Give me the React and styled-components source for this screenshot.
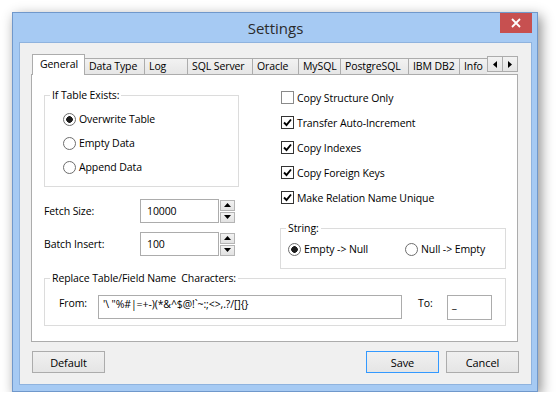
import styled, { createGlobalStyle } from "styled-components";

const GlobalStyle = createGlobalStyle`
    body {
        margin: 0;
        background: #ffffff;
        font-family: "Open Sans", "Noto Sans", sans-serif;
        font-size: 10.5px;
        letter-spacing: -0.1px;
        color: #000000;
    }

    * {
        box-sizing: border-box;
    }
`;

const tabs = [
    { name: "General", w: 53 },
    { name: "Data Type", w: 61 },
    { name: "Log", w: 44 },
    { name: "SQL Server", w: 66 },
    { name: "Oracle", w: 47 },
    { name: "MySQL", w: 43 },
    { name: "PostgreSQL", w: 69 },
    { name: "IBM DB2", w: 52 },
    { name: "Info", w: 28, clipped: true },
];

const checks = [
    { label: "Copy Structure Only", on: false },
    { label: "Transfer Auto-Increment", on: true },
    { label: "Copy Indexes", on: true },
    { label: "Copy Foreign Keys", on: true },
    { label: "Make Relation Name Unique", on: true },
];

function Triangle({ dir }) {
    const points = {
        up: "0,4 3.5,0 7,4",
        down: "0,0 3.5,4 7,0",
        left: "4,0 0,3.5 4,7",
        right: "0,0 4,3.5 0,7",
    }[dir];
    const vertical = dir === "up" || dir === "down";

    return (
        <svg width={vertical ? 7 : 4} height={vertical ? 4 : 7} viewBox={vertical ? "0 0 7 4" : "0 0 4 7"}>
            <polygon points={points} fill="#000" />
        </svg>
    );
}

function Radio({ checked, children }) {
    return (
        <RadioRow>
            <RadioDot $checked={checked} />
            <span>{children}</span>
        </RadioRow>
    );
}

function NumberField({ label, value }) {
    return (
        <FieldRow>
            <FieldLabel>{label}</FieldLabel>
            <TextBox $w={79}>{value}</TextBox>
            <Spinner>
                <SpinButton><Triangle dir="up" /></SpinButton>
                <SpinButton><Triangle dir="down" /></SpinButton>
            </Spinner>
        </FieldRow>
    );
}

function App() {
    return (
        <>
            <GlobalStyle />
            <Window>
                <TitleBar>
                    <Title>Settings</Title>
                    <CloseButton>
                        <svg width="10" height="10" viewBox="0 0 10 10">
                            <path d="M1 1 L9 9 M9 1 L1 9" stroke="#fff" strokeWidth="1.8" />
                        </svg>
                    </CloseButton>
                </TitleBar>
                <Client>
                    <TabStrip>
                        {tabs.map((tab, i) => (
                            <Tab key={tab.name} $w={tab.w} $active={i === 0} $first={i === 0} $clipped={tab.clipped}>
                                {tab.name}
                            </Tab>
                        ))}
                        <ScrollArrows>
                            <ArrowButton><Triangle dir="left" /></ArrowButton>
                            <ArrowButton><Triangle dir="right" /></ArrowButton>
                        </ScrollArrows>
                    </TabStrip>
                    <Panel>
                        <Column>
                            <Group>
                                <Legend>If Table Exists:</Legend>
                                <GroupBody $pad="4px 0 7px 18px">
                                    <Radio checked>Overwrite Table</Radio>
                                    <Radio>Empty Data</Radio>
                                    <Radio>Append Data</Radio>
                                </GroupBody>
                            </Group>
                            <NumberField label="Fetch Size:" value="10000" />
                            <NumberField label="Batch Insert:" value="100" />
                        </Column>
                        <Column $right>
                            {checks.map((c) => (
                                <CheckRow key={c.label}>
                                    <CheckBox $checked={c.on}>
                                        {c.on && (
                                            <svg width="9" height="9" viewBox="0 0 9 9">
                                                <path d="M1 4.5 L3.5 7 L8 1.5" stroke="#000" strokeWidth="1.9" fill="none" />
                                            </svg>
                                        )}
                                    </CheckBox>
                                    <span>{c.label}</span>
                                </CheckRow>
                            ))}
                            <Group $top={10}>
                                <Legend>String:</Legend>
                                <GroupBody $pad="1px 0 7px 7px" $cols="117px auto">
                                    <Radio checked>{"Empty -> Null"}</Radio>
                                    <Radio>{"Null -> Empty"}</Radio>
                                </GroupBody>
                            </Group>
                        </Column>
                        <Group $wide $top={1}>
                            <Legend>Replace Table/Field Name&nbsp; Characters:</Legend>
                            <ReplaceRow>
                                <FieldLabel $w={39}>From:</FieldLabel>
                                <TextBox $w={304} $h={24} $compact>{"'\\ \"%#|=+-)(*&^$@!`~:;<>,.?/[]{}"}</TextBox>
                                <FieldLabel $w={29} $gap={16}>To:</FieldLabel>
                                <TextBox $w={45} $h={25} $compact>_</TextBox>
                            </ReplaceRow>
                        </Group>
                    </Panel>
                    <ButtonRow>
                        <Button>Default</Button>
                        <Button $default>Save</Button>
                        <Button>Cancel</Button>
                    </ButtonRow>
                </Client>
            </Window>
        </>
    );
}

const Window = styled.div`
    margin: 12px 0 0 12px;
    width: 526px;
    height: 380px;
    display: flex;
    flex-direction: column;
    padding: 0 5px 6px 6px;
    background: #a6caf3;
    border: 1px solid #7098cb;
    box-shadow: 3px 4px 12px rgba(0, 0, 0, 0.45);
`;

const TitleBar = styled.div`
    height: 29px;
    display: grid;
    grid-template-columns: 1fr auto 1fr;
    align-items: start;
`;

const Title = styled.div`
    grid-column: 2;
    font-size: 15px;
    letter-spacing: 0;
    line-height: 31px;
    color: #2b2b2b;
`;

const CloseButton = styled.div`
    grid-column: 3;
    justify-self: end;
    width: 32px;
    height: 20px;
    background: #c75050;
    display: flex;
    align-items: center;
    justify-content: center;
`;

const Client = styled.div`
    flex: 1;
    display: flex;
    flex-direction: column;
    padding: 11px 12px 11px 11px;
    background: #f0f0f0;
    border: 1px solid #8fb3de;
`;

const TabStrip = styled.div`
    margin-left: 1px;
    width: 486px;
    height: 20px;
    display: flex;
    align-items: flex-end;
`;

const Tab = styled.div`
    position: relative;
    z-index: ${(p) => (p.$active ? 1 : 0)};
    flex: none;
    width: ${(p) => p.$w}px;
    height: ${(p) => (p.$active ? 21 : 16)}px;
    margin-left: ${(p) => (p.$first ? 0 : -1)}px;
    margin-bottom: ${(p) => (p.$active ? -1 : 0)}px;
    padding-left: ${(p) => (p.$active ? 7 : 4)}px;
    border: 1px solid #acacac;
    border-bottom: none;
    border-right: ${(p) => (p.$clipped ? "none" : "1px solid #acacac")};
    background: ${(p) => (p.$active ? "#ffffff" : "linear-gradient(#f2f2f2, #e6e6e6)")};
    line-height: ${(p) => (p.$active ? 19 : 15)}px;
    white-space: nowrap;
    overflow: hidden;
`;

const ScrollArrows = styled.div`
    align-self: flex-start;
    margin-top: 2px;
    display: flex;
`;

const ArrowButton = styled.div`
    width: 16px;
    height: 16px;
    border: 1px solid #acacac;
    background: linear-gradient(#f2f2f2, #e5e5e5);
    display: flex;
    align-items: center;
    justify-content: center;

    & + & {
        margin-left: -1px;
    }
`;

const Panel = styled.div`
    width: 487px;
    height: 268px;
    background: #ffffff;
    border: 1px solid #acacac;
    padding: 12px 11px 0 12px;
    display: grid;
    grid-template-columns: 195px 226px;
    column-gap: 41px;
    align-content: start;
`;

const Column = styled.div`
    display: flex;
    flex-direction: column;
    margin-top: ${(p) => (p.$right ? -2 : 0)}px;
`;

const Group = styled.fieldset`
    grid-column: ${(p) => (p.$wide ? "1 / -1" : "auto")};
    margin: ${(p) => p.$top || 0}px 0 0 0;
    padding: 0;
    min-width: 0;
    border: 1px solid #dcdcdc;
`;

const Legend = styled.legend`
    margin-left: 5px;
    padding: 0 2px;
    line-height: 16px;
`;

const GroupBody = styled.div`
    padding: ${(p) => p.$pad};
    display: grid;
    grid-template-columns: ${(p) => p.$cols || "1fr"};
`;

const RadioRow = styled.div`
    height: 24px;
    display: flex;
    align-items: center;
    gap: 3px;
`;

const RadioDot = styled.span`
    flex: none;
    width: 13px;
    height: 13px;
    border-radius: 50%;
    border: 1px solid #6d6d6d;
    background: ${(p) => (p.$checked ? "radial-gradient(circle, #1c1c1c 0 3px, #ffffff 3.6px)" : "#ffffff")};
`;

const CheckRow = styled.div`
    height: 25px;
    margin-left: 1px;
    display: flex;
    align-items: center;
    gap: 3px;
`;

const CheckBox = styled.span`
    flex: none;
    width: 13px;
    height: 13px;
    border: 1px solid ${(p) => (p.$checked ? "#333333" : "#8a8a8a")};
    background: #ffffff;
    display: flex;
    align-items: center;
    justify-content: center;
`;

const FieldRow = styled.div`
    display: flex;
    align-items: center;
    margin-top: 12px;

    & + & {
        margin-top: 9px;
    }
`;

const FieldLabel = styled.span`
    flex: none;
    width: ${(p) => p.$w || 96}px;
    margin-left: ${(p) => p.$gap || 0}px;
    line-height: 16px;
`;

const TextBox = styled.div`
    flex: none;
    width: ${(p) => p.$w}px;
    height: ${(p) => p.$h || 24}px;
    border: 1px solid #acacac;
    background: #ffffff;
    padding: ${(p) => (p.$compact ? "1px 4px" : "0 6px")};
    line-height: ${(p) => (p.$compact ? "15px" : "22px")};
    white-space: nowrap;
    overflow: hidden;
`;

const Spinner = styled.div`
    margin-left: 1px;
    display: flex;
    flex-direction: column;
    gap: 1px;
`;

const SpinButton = styled.div`
    width: 15px;
    height: 11px;
    border: 1px solid #b4b4b4;
    background: linear-gradient(#f2f2f2, #e2e2e2);
    display: flex;
    align-items: center;
    justify-content: center;
`;

const ReplaceRow = styled.div`
    padding: 9px 0 5px 14px;
    display: flex;
    align-items: flex-start;
`;

const ButtonRow = styled.div`
    margin-top: 9px;
    display: flex;
`;

const Button = styled.div`
    width: 73px;
    height: 22px;
    margin-left: 7px;
    border: 1px solid ${(p) => (p.$default ? "#3399ff" : "#acacac")};
    background: linear-gradient(#f0f0f0, #e5e5e5);
    display: flex;
    align-items: center;
    justify-content: center;
    font-size: 11px;

    &:first-child {
        margin-left: 1px;
        margin-right: auto;
    }
`;

export default App;
